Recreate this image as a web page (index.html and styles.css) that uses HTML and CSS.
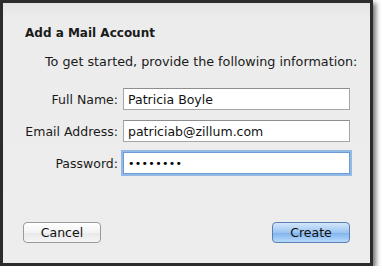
FILE: index.html
```html
<!DOCTYPE html>
<html lang="en">
  <head>
    <meta charset="UTF-8" />
    <title>Add a Mail Account</title>
    <link rel="stylesheet" href="styles.css">
  </head>
  <body>
    <div class="window">
      <h1 class="title">Add a Mail Account</h1>
      <p class="intro">To get started, provide the following information:</p>

      <div class="form">
        <label class="label" for="name">Full Name:</label>
        <input class="field" id="name" type="text" value="Patricia Boyle" />

        <label class="label" for="email">Email Address:</label>
        <input class="field" id="email" type="text" value="patriciab@zillum.com" />

        <label class="label" for="pass">Password:</label>
        <input class="field focused" id="pass" type="password" value="secretpw" />
      </div>

      <div class="buttons">
        <button class="btn">Cancel</button>
        <button class="btn default">Create</button>
      </div>
    </div>
  </body>
</html>
```

FILE: styles.css
```css
* {
  margin: 0;
  padding: 0;
  box-sizing: border-box;
}
body {
  background: #fff;
  font-family: "DejaVu Sans", "Liberation Sans", sans-serif;
  font-size: 12px;
  color: #1a1a1a;
}
.window {
  width: 373px;
  height: 266px;
  border: 3px solid #2c2c2c;
  background: linear-gradient(#e4e4e4, #ececec 14px, #ededed);
  box-shadow: 3px 3px 5px rgba(0, 0, 0, 0.55);
  display: flex;
  flex-direction: column;
  padding: 22px 20px 20px 20px;
}
.title {
  font-size: 12px;
  font-weight: bold;
  line-height: 16px;
  margin-left: 2px;
}
.intro {
  font-size: 12.75px;
  line-height: 16px;
  white-space: nowrap;
  margin: 13px 0 0 22px;
}
/* label column + input column */
.form {
  display: grid;
  grid-template-columns: 95px 1fr;
  column-gap: 5px;
  row-gap: 10px;
  margin-top: 18px;
}
.label {
  text-align: right;
  align-self: center;
  font-size: 12.5px;
}
.field {
  height: 22px;
  border: 1px solid #a6a6a6;
  border-top-color: #8e8e8e;
  background: #fff;
  font-family: inherit;
  font-size: 12.5px;
  color: #111;
  padding: 0 4px;
  outline: none;
}
.focused {
  border-color: #6b9bd2;
  box-shadow: 0 0 0 2px #93b9e6;
  font-size: 11px;
  letter-spacing: 0.3px;
  color: #000;
}
.buttons {
  margin-top: auto;
  display: flex;
  justify-content: space-between;
}
.btn {
  width: 78px;
  height: 21px;
  border: 1px solid #9a9a9a;
  border-radius: 4px;
  background: linear-gradient(#ffffff, #f3f3f3 50%, #e8e8e8 51%, #f6f6f6);
  font-family: inherit;
  font-size: 12.5px;
  color: #111;
}
.default {
  border-color: #5b7fb2;
  background: linear-gradient(#d3e6fb, #9cc6f1 50%, #7db3ec 51%, #b6d9fb);
}
```
